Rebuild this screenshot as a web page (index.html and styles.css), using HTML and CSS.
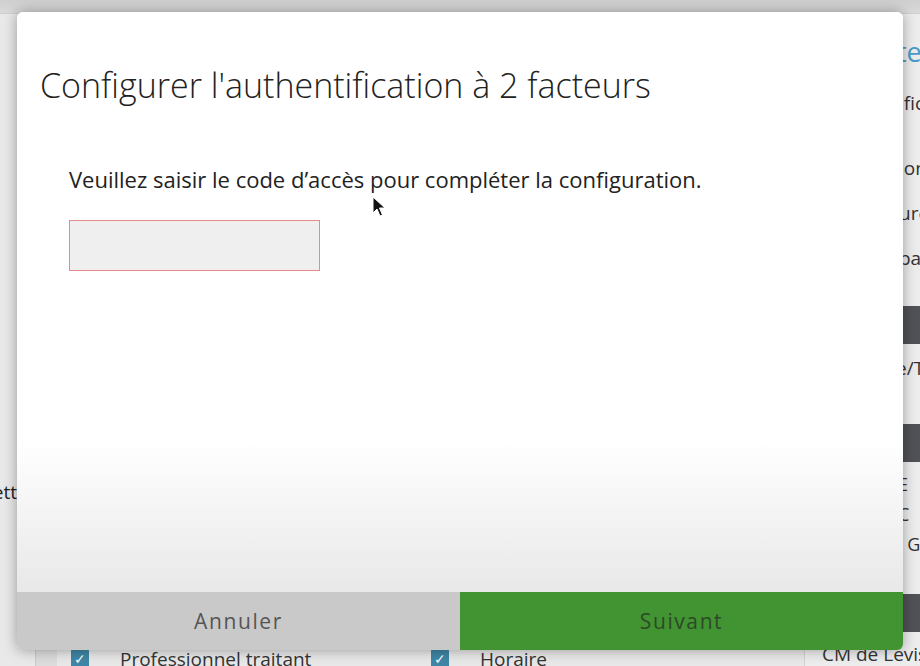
FILE: index.html
```html
<!DOCTYPE html>
<html lang="fr">
<head>
  <meta charset="UTF-8">
  <meta name="viewport" content="width=device-width, initial-scale=1.0">
  <title>Authentification à 2 facteurs</title>
  <link rel="stylesheet" href="styles.css">
</head>
<body>

<!-- page derrière la fenêtre -->
<div class="app">
  <div class="topbar"></div>
  <div class="app-body">
    <div class="side-left">
      <span class="side-label">Étiquett</span>
    </div>
    <div class="main-area">
      <div class="main-space"></div>
      <div class="check-row">
        <label class="check"><span class="box">&#10003;</span>Professionnel traitant</label>
        <label class="check"><span class="box">&#10003;</span>Horaire</label>
      </div>
    </div>
    <div class="side-right">
      <div class="r-title">tes</div>
      <div class="r-line r-first">ifications</div>
      <div class="r-line">ions</div>
      <div class="r-line">ure</div>
      <div class="r-line">pas</div>
      <div class="r-bar"></div>
      <div class="r-line r-narrow">e/Temps</div>
      <div class="r-bar r-bar2"></div>
      <div class="r-small">E<br>C<br>, G</div>
      <div class="r-bar r-bar3"></div>
      <div class="r-last">CM de Lévis</div>
    </div>
  </div>
</div>

<div class="modal">
  <div class="modal-body">
    <h1>Configurer l'authentification à 2 facteurs</h1>
    <p>Veuillez saisir le code d’accès pour compléter la configuration.</p>
    <input type="text" class="code-input">
  </div>
  <div class="modal-footer">
    <button class="btn btn-cancel">Annuler</button>
    <button class="btn btn-next">Suivant</button>
  </div>
</div>

<svg class="cursor" width="14" height="22" viewBox="0 0 14 22">
  <path d="M1 1 L1 17 L5 13 L8 20 L10.5 19 L7.5 12 L13 12 Z" fill="#111" stroke="#fff" stroke-width="1"/>
</svg>

</body>
</html>
```

FILE: styles.css
```css
html, body {
  margin: 0;
  height: 100%;
  overflow: hidden;
}

body {
  font-family: "Open Sans", "Liberation Sans", sans-serif;
  background-color: #e2e2e2;
  color: #333;
  position: relative;
}

/* page en arrière-plan */
.app {
  height: 100%;
  display: flex;
  flex-direction: column;
}

.topbar {
  height: 14px;
  background: linear-gradient(#cfcfcf, #dadada);
  border-bottom: 1px solid #d0d0d0;
}

.app-body {
  flex: 1;
  display: flex;
}

.side-left {
  width: 35px;
  background-color: #e9e9e9;
  border-right: 1px solid #c9c9c9;
  display: flex;
  align-items: flex-start;
  justify-content: flex-end;
  overflow: hidden;
}

.side-label {
  margin-top: 465px;
  margin-right: 18px;
  font-size: 19px;
  color: #222;
  white-space: nowrap;
}

.main-area {
  flex: 1;
  display: flex;
  flex-direction: column;
  background-color: #e6e6e6;
  border-left: 21px solid #dcdcdc;
}

.main-space {
  flex: 1;
}

.check-row {
  height: 20px;
  display: flex;
  padding-left: 14px;
  background-color: #e8e8e8;
  overflow: hidden;
}

.check {
  width: 360px;
  display: flex;
  align-items: center;
  gap: 31px;
  font-size: 19px;
  color: #333;
  margin-top: 6px;
}

.box {
  width: 18px;
  height: 18px;
  background-color: #3f86a6;
  color: #fff;
  font-size: 14px;
  line-height: 18px;
  text-align: center;
  flex-shrink: 0;
}

.side-right {
  width: 115px;
  background-color: #ededed;
  border-left: 1px solid #d2d2d2;
  overflow: hidden;
  white-space: nowrap;
  color: #333;
}

.r-title {
  margin-top: 20px;
  padding-left: 92px;
  font-size: 27px;
  color: #4a9ccb;
  line-height: 36px;
}

.r-line {
  padding-left: 94px;
  font-size: 19px;
  line-height: 45px;
}

.r-first {
  margin-top: 11px;
  margin-bottom: 20px;
}

.r-narrow {
  padding-left: 91px;
}

.r-bar {
  height: 38px;
  background-color: #505257;
  margin: 25px 0 2px;
}

.r-bar2 {
  margin-top: 33px;
}

.r-small {
  padding-left: 93px;
  font-size: 18px;
  line-height: 30px;
  margin-top: 7px;
}

.r-bar3 {
  margin-top: 35px;
}

.r-last {
  padding-left: 17px;
  font-size: 19px;
  line-height: 24px;
  margin-top: 10px;
}

/* fenêtre modale */
.modal {
  position: absolute;
  left: 17px;
  top: 12px;
  width: 886px;
  height: 638px;
  border-radius: 6px;
  overflow: hidden;
  box-shadow: 0 0 14px rgba(0, 0, 0, 0.35);
  display: flex;
  flex-direction: column;
  background-color: #fff;
}

.modal-body {
  flex: 1;
  padding: 50px 23px 0;
  background: linear-gradient(#ffffff 74%, #e8e8e8 100%);
}

.modal-body h1 {
  margin: 0;
  font-size: 34px;
  font-weight: 300;
  color: #222;
  line-height: 46px;
}

.modal-body p {
  margin: 56px 0 0 29px;
  font-size: 22px;
  color: #222;
  line-height: 30px;
}

.code-input {
  display: block;
  margin: 26px 0 0 29px;
  width: 251px;
  height: 51px;
  box-sizing: border-box;
  background-color: #efefef;
  border: 1px solid #e58b8b;
  outline: none;
}

.modal-footer {
  height: 58px;
  display: flex;
}

.btn {
  flex: 1;
  border: none;
  font-family: "Open Sans", "Liberation Sans", sans-serif;
  font-size: 21px;
  letter-spacing: 1.6px;
  cursor: pointer;
}

.btn-cancel {
  background-color: #c9c9c9;
  color: #555;
}

.btn-next {
  background-color: #429332;
  color: #2c4a26;
}

.cursor {
  position: absolute;
  left: 372px;
  top: 196px;
}
```
